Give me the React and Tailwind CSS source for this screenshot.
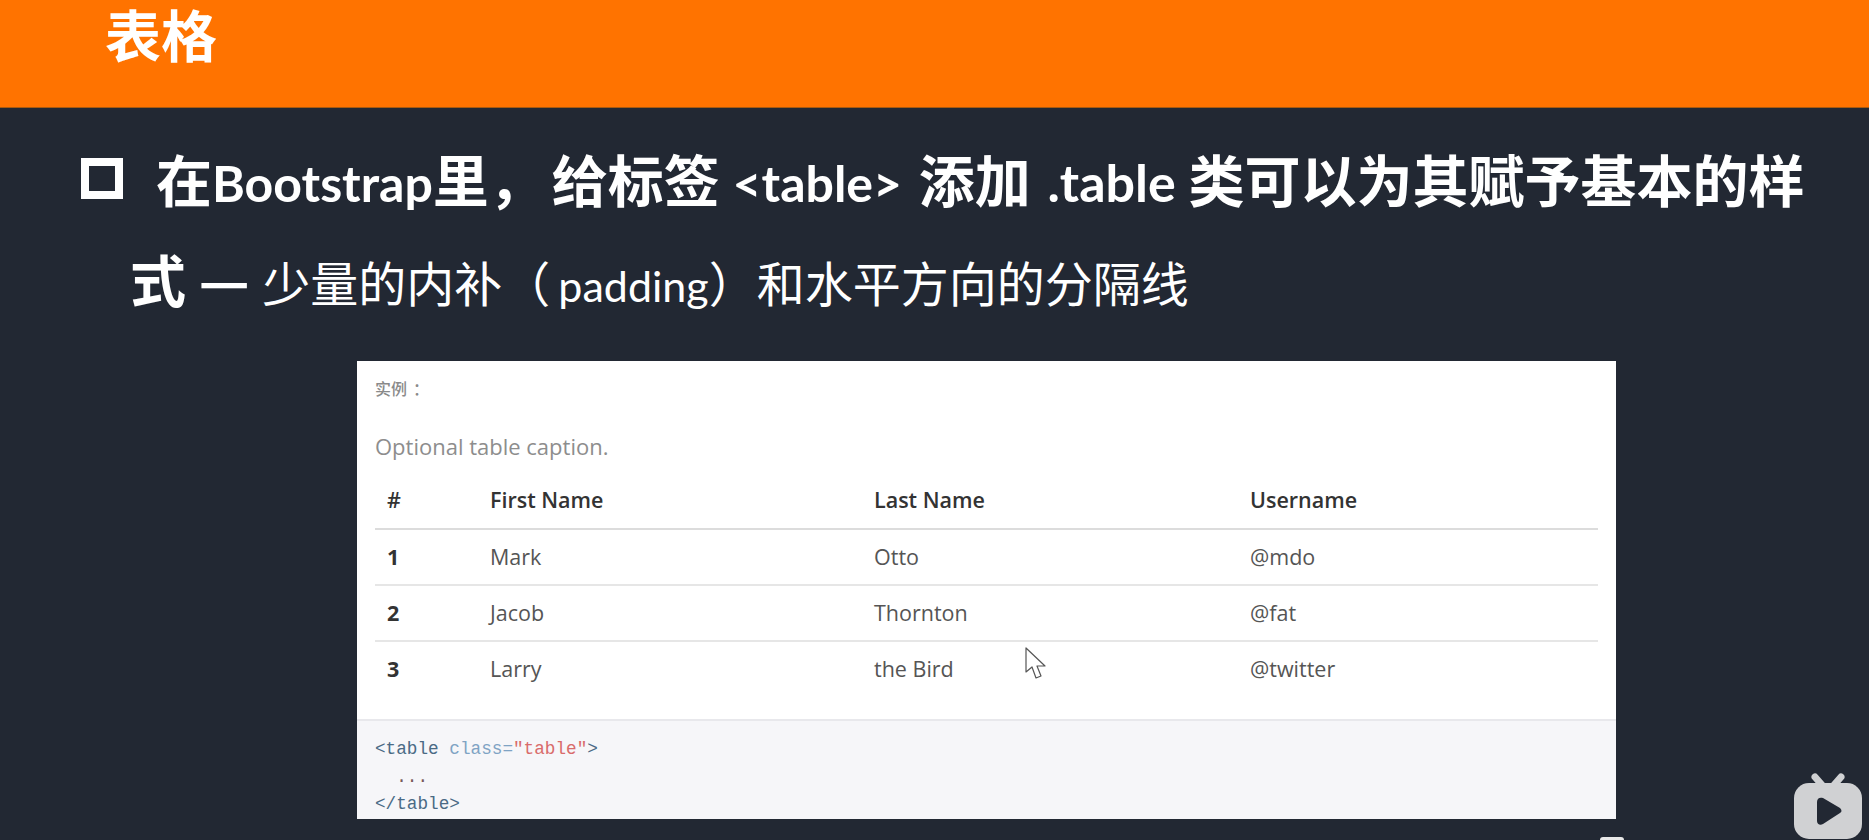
function Latin({ children, className = 'text-[50px]' }) {
  return <span className={`font-['Lato','Noto_Sans_CJK_SC',sans-serif] ${className}`}>{children}</span>;
}

const rows = [
  ['1', 'Mark', 'Otto', '@mdo'],
  ['2', 'Jacob', 'Thornton', '@fat'],
  ['3', 'Larry', 'the Bird', '@twitter'],
];

function Cursor() {
  return (
    <svg className="absolute left-[668px] top-[286px]" width="22" height="33" viewBox="0 0 22 33">
      <path d="M1 1V25L7 20L11 31L16 29L12 19H20Z" fill="#fff" stroke="#555" strokeWidth="1.2" strokeLinejoin="round" />
    </svg>
  );
}

function TvLogo() {
  return (
    <svg className="absolute left-[1794px] top-[773px]" width="68" height="66" viewBox="0 0 68 66">
      <path d="M21 4L28 12M47 4L40 12" stroke="#d0d1d3" strokeWidth="7" strokeLinecap="round" fill="none" />
      <rect x="0" y="10" width="68" height="56" rx="15" fill="#d0d1d3" />
      <path d="M23 29C23 25 26 24 29 25L46 35C48 37 48 39 46 40L29 51C26 53 23 51 23 48Z" fill="#222833" />
    </svg>
  );
}

export default function App() {
  return (
    <div className="relative h-[840px] w-full overflow-hidden bg-[#222833] font-['Noto_Sans_CJK_SC',sans-serif] text-white">
      <header className="flex h-[108px] items-start border-b border-[#a85a10] bg-[#ff7300] pl-[105px]">
        <h1 className="text-[56px] leading-[66px] font-bold">表格</h1>
      </header>

      <section className="flex items-center pl-[81px] pt-[34px]">
        <span className="mr-[33px] block h-[41px] w-[42px] border-[8px] border-white" />
        <p className="h-[72px] text-[56px] leading-[72px] font-bold whitespace-nowrap">
          在<Latin>Bootstrap</Latin>里，<span className="ml-[7px]">给标签</span> <Latin>&lt;table&gt;</Latin>{' '}
          <span className="ml-[4px]">添加</span> <Latin className="ml-[4px] text-[52px]">.table</Latin> 类可以为其赋予基本的样
        </p>
      </section>

      <p className="pl-[130px] pt-[28px] text-[48px] leading-[72px] whitespace-nowrap">
        <span className="text-[56px] font-bold">式 —</span> <span className="ml-[2px]">少量的内补</span>（
        <Latin className="ml-[8px] text-[43px]">padding</Latin>）和水平方向的分隔线
      </p>

      <main className="relative mt-[39px] ml-[357px] w-[1259px] bg-white">
        <div className="h-[358px] px-[18px]">
          <p className="pt-[15px] text-[16px] leading-[24px] font-medium text-[#8a8a8a]">
            实例<span className="ml-[6px]">：</span>
          </p>
          <p className="pt-[32px] font-['Open_Sans',sans-serif] text-[22px] leading-[28px] text-[#8d8d8d]">Optional table caption.</p>
          <table className="mt-[12px] w-full table-fixed border-collapse font-['Open_Sans',sans-serif]">
            <thead>
              <tr className="h-[57px] border-b-2 border-[#dcdcdc] text-left text-[21.5px] text-[#333333]">
                <th className="w-[115px] pl-[12px] font-semibold">#</th>
                <th className="w-[384px] font-semibold">First Name</th>
                <th className="w-[376px] font-semibold">Last Name</th>
                <th className="font-semibold">Username</th>
              </tr>
            </thead>
            <tbody>
              {rows.map((r, i) => (
                <tr key={r[0]} className={`h-[56px] text-[21.5px] text-[#555555] ${i < 2 ? 'border-b-2 border-[#e6e6e6]' : ''}`}>
                  <td className="pl-[12px] font-bold text-[#333333]">{r[0]}</td>
                  <td>{r[1]}</td>
                  <td>{r[2]}</td>
                  <td>{r[3]}</td>
                </tr>
              ))}
            </tbody>
          </table>
        </div>
        <pre className="h-[100px] border-t-2 border-[#e8e8ec] bg-[#f6f6f9] px-[18px] pt-[14px] font-['DejaVu_Sans_Mono',monospace] text-[17.7px] leading-[26.5px] text-[#4a6a85]"><code><span>&lt;table</span> <span className="text-[#7fa3c4]">class=</span><span className="text-[#d96b6b]">"table"</span><span>&gt;</span>{'\n'}<span className="text-[#7a5a5a]">  ...</span>{'\n'}<span>&lt;/table&gt;</span></code></pre>
        <Cursor />
      </main>

      <div className="absolute left-[1600px] top-[837px] h-[3px] w-[24px] rounded-t-full bg-[#e8e8e8]" />
      <TvLogo />
    </div>
  );
}
